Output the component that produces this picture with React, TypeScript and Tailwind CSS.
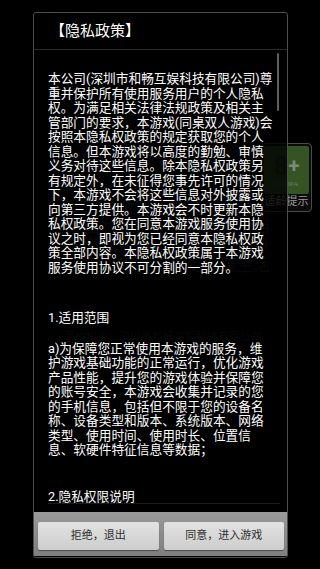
import React from "react";

const p1 = [
  "本公司(深圳市和畅互娱科技有限公司)尊",
  "重并保护所有使用服务用户的个人隐私",
  "权。为满足相关法律法规政策及相关主",
  "管部门的要求，本游戏(同桌双人游戏)会",
  "按照本隐私权政策的规定获取您的个人",
  "信息。但本游戏将以高度的勤勉、审慎",
  "义务对待这些信息。除本隐私权政策另",
  "有规定外，在未征得您事先许可的情况",
  "下，本游戏不会将这些信息对外披露或",
  "向第三方提供。本游戏会不时更新本隐",
  "私权政策。您在同意本游戏服务使用协",
  "议之时，即视为您已经同意本隐私权政",
  "策全部内容。本隐私权政策属于本游戏",
  "服务使用协议不可分割的一部分。",
];

const p2 = [
  "a)为保障您正常使用本游戏的服务，维",
  "护游戏基础功能的正常运行，优化游戏",
  "产品性能，提升您的游戏体验并保障您",
  "的账号安全，本游戏会收集并记录的您",
  "的手机信息，包括但不限于您的设备名",
  "称、设备类型和版本、系统版本、网络",
  "类型、使用时间、使用时长、位置信",
  "息、软硬件特征信息等数据；",
];

const advice = [
  "抵制不良游戏，拒绝盗版游戏",
  "注意自我保护，谨防受骗上当",
  "适度游戏益脑，沉迷游戏伤身",
  "合理安排时间，享受健康生活",
];

const font = { fontFamily: 'Roboto, "Noto Sans CJK SC", sans-serif' };

export default function App() {
  return (
    <div
      className="relative w-[320px] h-[569px] overflow-hidden bg-black"
      style={font}
    >
      {/* background game screen (dimmed) */}
      <div className="absolute inset-0">
        <div className="absolute left-0 right-0 top-[197px] flex flex-col items-center text-[17px] leading-[19.5px] text-[#2a2a2a]">
          {advice.map((l) => (
            <div key={l} className="whitespace-nowrap">
              {l}
            </div>
          ))}
        </div>
        <div className="absolute left-0 right-0 top-[330px] flex justify-center pl-[6px] text-[11px] text-[#282828] whitespace-nowrap">
          著作权人：深圳市和畅互娱科技有限公司
        </div>
        <div className="absolute left-[261px] top-[143px] w-[51px] h-[69px] rounded-[4px] border border-[#4a4a4a] bg-[#0c0c0c] p-[2px] flex flex-col">
          <div className="h-[48px] rounded-[2px] bg-[#355424] flex flex-col items-center justify-center">
            <div className="flex items-center leading-none text-[26px] font-bold text-[#2c3e24]">
              8<span className="text-[#7c8a74] text-[20px]">+</span>
            </div>
            <div className="text-[7px] leading-none mt-[2px] text-[#6a7a60]" style={{ fontFamily: '"Liberation Serif", serif' }}>
              CADPA
            </div>
          </div>
          <div className="flex-1 flex items-center justify-center text-[11px] leading-none text-[#9a9a9a] whitespace-nowrap">
            适龄提示
          </div>
        </div>
      </div>

      {/* dialog overlay */}
      <div className="absolute inset-0 flex items-start justify-start pl-[33px] pt-[12px]">
        <div className="w-[255px] h-[546px] flex flex-col rounded-[3px] border border-[#4d4d4d] bg-black/[0.8] overflow-hidden">
          <div className="h-[36px] flex items-center pl-[16px] pt-[1px] text-[15px] text-white whitespace-nowrap">
            【隐私政策】
          </div>
          <div className="h-px bg-[#2b2b2b]" />
          <div className="relative h-[454px] overflow-hidden">
            <div className="absolute right-[8px] top-[3px] w-[2px] h-[58px] rounded-full bg-[#5e5e5e]" />
            <div className="pl-[14px] pt-[22px] text-[12.7px] leading-[14.5px] text-white">
              <div>
                {p1.map((l) => (
                  <div key={l} className="whitespace-nowrap">
                    {l}
                  </div>
                ))}
              </div>
              <div className="mt-[36px] whitespace-nowrap">1.适用范围</div>
              <div className="mt-[16px]">
                {p2.map((l) => (
                  <div key={l} className="whitespace-nowrap">
                    {l}
                  </div>
                ))}
              </div>
              <div className="mt-[32px] whitespace-nowrap">2.隐私权限说明</div>
            </div>
            <div className="absolute left-[14px] right-[7px] bottom-0 h-px bg-[#1c1c1c]" />
          </div>
          <div className="h-[8px]" />
          <div className="h-[44px] bg-gradient-to-b from-[#9a9a9a] to-[#7e7e7e] grid grid-cols-2 gap-[5px] pl-[4px] pr-[3px] pt-[10px] pb-[6px]">
            <button className="h-[28px] rounded-[2px] bg-gradient-to-b from-[#e2e2e2] to-[#cdcdcd] shadow-[0_1px_1px_rgba(0,0,0,0.45)] text-[11px] text-[#2e2e2e]">
              拒绝，退出
            </button>
            <button className="h-[28px] rounded-[2px] bg-gradient-to-b from-[#e2e2e2] to-[#cdcdcd] shadow-[0_1px_1px_rgba(0,0,0,0.45)] text-[11px] text-[#2e2e2e]">
              同意，进入游戏
            </button>
          </div>
        </div>
      </div>
    </div>
  );
}
